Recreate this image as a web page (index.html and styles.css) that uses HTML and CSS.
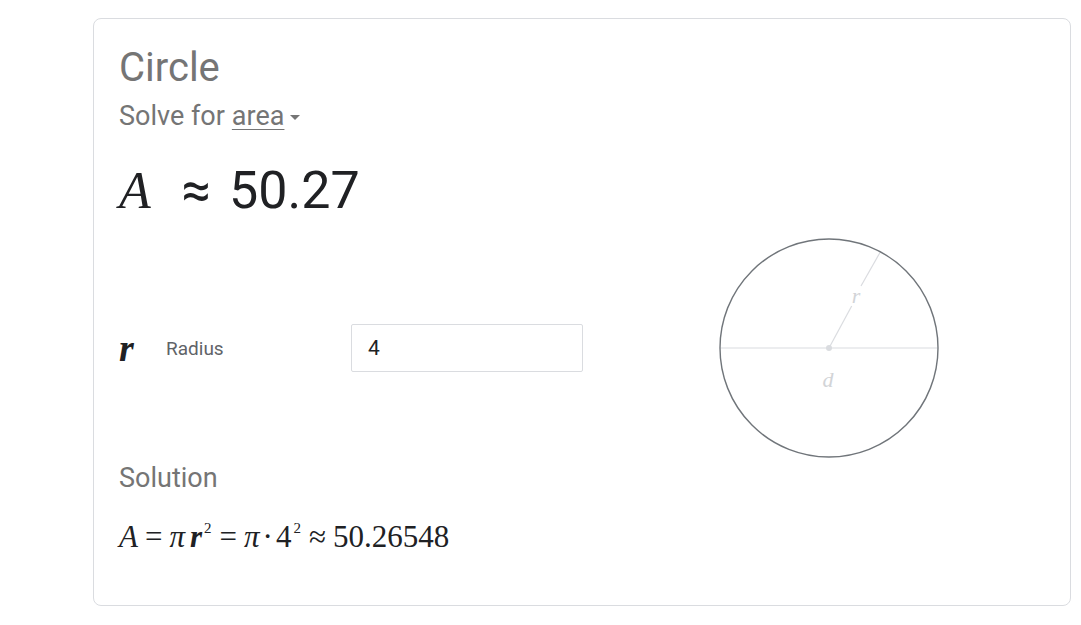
FILE: index.html
```html
<!DOCTYPE html>
<html>
<head>
<meta charset="utf-8">
<link rel="stylesheet" href="styles.css">
</head>
<body>
<div class="card">
  <div class="title">Circle</div>
  <div class="solve">Solve for <span class="pick">area</span><span class="caret"></span></div>
  <div class="result"><span class="mvar">A</span><span class="approx">≈</span><span class="num">50.27</span></div>
  <div class="body">
    <div class="inputs">
      <span class="ivar">r</span>
      <span class="ilabel">Radius</span>
      <div class="field">4</div>
    </div>
    <svg class="diagram" width="222" height="222" viewBox="0 0 222 222">
      <line x1="2" y1="111" x2="220" y2="111" stroke="#dadce0" stroke-width="1.2"/>
      <line x1="111" y1="111" x2="133.7" y2="69" stroke="#dadce0" stroke-width="1.2"/>
      <line x1="143" y1="49" x2="162" y2="15.5" stroke="#dadce0" stroke-width="1.2"/>
      <circle cx="111" cy="111" r="3" fill="#dadce0"/>
      <text x="138" y="66" class="dlabel">r</text>
      <text x="110" y="150" class="dlabel">d</text>
      <circle cx="111" cy="111" r="109" fill="none" stroke="#70757a" stroke-width="1.4"/>
    </svg>
  </div>
  <div class="sol-label">Solution</div>
  <div class="formula"><i>A</i><span class="op">=</span><i>π</i><i class="fr">r</i><sup>2</sup><span class="op">=</span><i>π</i><span class="dot">·</span>4<sup>2</sup><span class="op">≈</span>50.26548</div>
</div>
</body>
</html>
```
FILE: styles.css
```css
html, body {
  margin: 0;
  padding: 0;
  background: #fff;
}
body {
  font-family: Roboto, "Liberation Sans", Arial, sans-serif;
}
.card {
  margin: 18px 10px 0 93px;
  border: 1px solid #dadce0;
  border-radius: 8px;
  padding: 27px 25px 0 25px;
  height: 559px;
  box-sizing: content-box;
}
.title {
  font-size: 40px;
  line-height: 44px;
  color: #757575;
}
.solve {
  font-size: 27px;
  line-height: 32px;
  color: #757575;
  margin-top: 10px;
  display: flex;
  align-items: center;
}
.solve .pick {
  margin-left: 7px;
  text-decoration: underline;
  text-decoration-thickness: 1px;
  text-underline-offset: 4px;
}
.caret {
  display: inline-block;
  width: 0;
  height: 0;
  border-left: 5px solid transparent;
  border-right: 5px solid transparent;
  border-top: 5px solid #757575;
  margin-left: 6px;
  margin-top: 2px;
}
.result {
  margin-top: 29px;
  display: flex;
  align-items: baseline;
  color: #202124;
  line-height: 60px;
}
.mvar {
  font-family: "Liberation Serif", "DejaVu Serif", serif;
  font-style: italic;
  font-size: 52px;
}
.approx {
  font-size: 52px;
  margin-left: 31px;
}
.num {
  font-size: 52px;
  margin-left: 18px;
}
.body {
  display: flex;
  align-items: center;
  margin-top: 16px;
}
.inputs {
  width: 464px;
  display: flex;
  align-items: center;
}
.ivar {
  font-family: "Liberation Serif", "DejaVu Serif", serif;
  font-style: italic;
  font-weight: bold;
  font-size: 38px;
  color: #202124;
  width: 47px;
}
.ilabel {
  font-size: 19px;
  color: #5f6368;
  width: 185px;
}
.field {
  width: 214px;
  height: 46px;
  border: 1px solid #dadce0;
  border-radius: 2px;
  padding-left: 16px;
  font-size: 21px;
  line-height: 46px;
  color: #202124;
}
.diagram {
  margin-left: 135px;
  display: block;
}
.dlabel {
  font-family: "Liberation Serif", "DejaVu Serif", serif;
  font-style: italic;
  font-size: 22px;
  fill: #d2d4d7;
  text-anchor: middle;
}
.sol-label {
  margin-top: 3px;
  font-size: 27px;
  line-height: 32px;
  color: #757575;
}
.formula {
  margin-top: 25px;
  font-family: "Liberation Serif", "Times New Roman", serif;
  font-size: 31px;
  line-height: 36px;
  color: #202124;
}
.formula .op {
  margin: 0 7px;
}
.formula .fr {
  font-weight: bold;
  margin-left: 5px;
}
.formula .dot {
  margin: 0 3px;
}
.formula sup {
  font-size: 15px;
  vertical-align: 14px;
  line-height: 0;
  margin-left: 2px;
  margin-right: 1px;
}
```
